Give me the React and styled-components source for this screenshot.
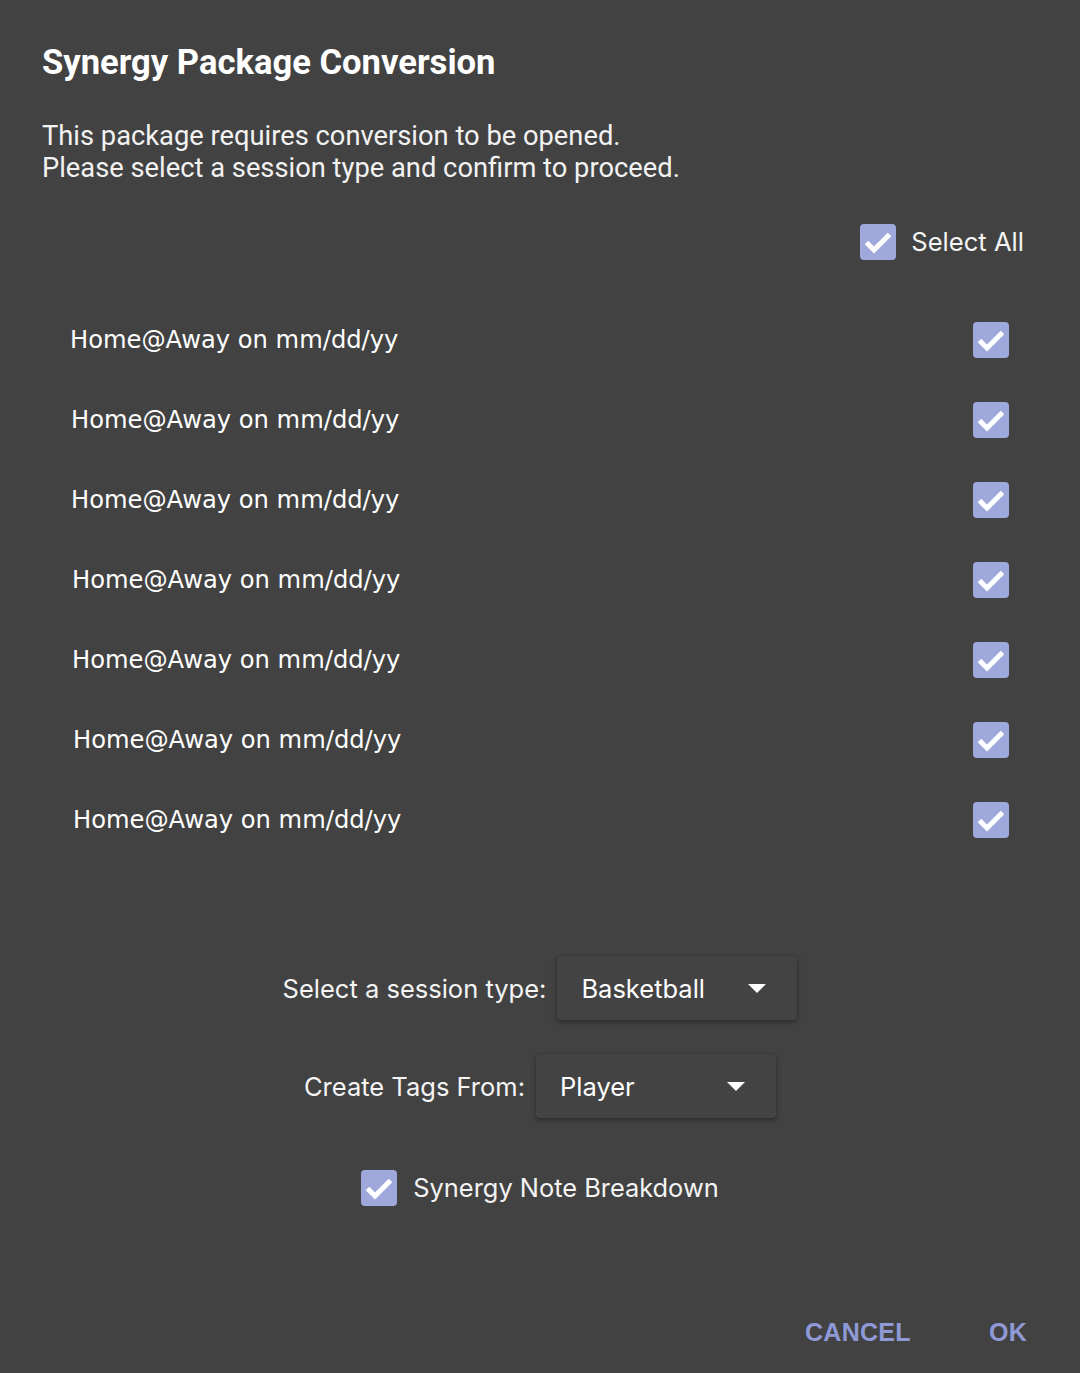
import React from "react";
import styled, { createGlobalStyle } from "styled-components";

const GlobalStyle = createGlobalStyle`
	html, body {
		margin: 0;
		padding: 0;
		background: #424242;
	}
`;

const Dialog = styled.div`
	width: 1080px;
	height: 1373px;
	box-sizing: border-box;
	background: #424242;
	color: #ffffff;
	padding: 40px 0 0 0;
	display: flex;
	flex-direction: column;
`;

const Title = styled.h1`
	margin: 0;
	padding-left: 42px;
	font-family: Roboto, "Liberation Sans", sans-serif;
	font-weight: 700;
	font-size: 34.6px;
	line-height: 44px;
`;

const Description = styled.p`
	margin: 36px 0 0 0;
	padding-left: 42px;
	font-family: Roboto, "Liberation Sans", sans-serif;
	font-size: 27.3px;
	line-height: 32px;
	color: #f2f2f2;
`;

const SelectAllRow = styled.label`
	margin-top: 40px;
	align-self: flex-end;
	padding-right: 56px;
	display: flex;
	align-items: center;
	gap: 15px;
	font-family: Inter, "Noto Sans", sans-serif;
	font-size: 25.6px;
	line-height: 36px;
	color: #f4f4f4;
`;

const Box = styled.span`
	width: 36px;
	height: 36px;
	border-radius: 4px;
	background: #9fa8da;
	display: flex;
	align-items: center;
	justify-content: center;
	flex-shrink: 0;
`;

const GameList = styled.div`
	margin-top: 40px;
	display: flex;
	flex-direction: column;
`;

const GameRow = styled.div`
	height: 80px;
	display: flex;
	align-items: center;
	justify-content: space-between;
	padding: 0 71px 0 ${(p) => p.$indent}px;
	font-family: "DejaVu Sans", Verdana, sans-serif;
	font-size: 24.2px;
	color: #ffffff;
`;

const Options = styled.div`
	margin-top: 96px;
	display: flex;
	flex-direction: column;
	align-items: center;
`;

const Field = styled.div`
	display: flex;
	align-items: center;
	gap: 11px;
	margin-top: ${(p) => p.$gap || 0}px;
	font-family: Inter, "Noto Sans", sans-serif;
	font-size: 25.5px;
	color: #f4f4f4;
`;

const Dropdown = styled.div`
	width: 240px;
	height: 64px;
	box-sizing: border-box;
	padding: 0 31px 0 24px;
	display: flex;
	align-items: center;
	justify-content: space-between;
	background: #434343;
	border-radius: 4px;
	box-shadow: 0 2px 5px rgba(0, 0, 0, 0.35), 0 0 1px rgba(0, 0, 0, 0.3);
	color: #ffffff;
`;

const Arrow = styled.span`
	width: 0;
	height: 0;
	border-left: 9px solid transparent;
	border-right: 9px solid transparent;
	border-top: 9px solid #ffffff;
`;

const NoteRow = styled.label`
	margin-top: 52px;
	display: flex;
	align-items: center;
	gap: 16px;
	font-family: Inter, "Noto Sans", sans-serif;
	font-size: 25.4px;
	line-height: 36px;
	color: #f4f4f4;
`;

const Footer = styled.div`
	margin-top: auto;
	padding: 0 53px 23px 0;
	display: flex;
	justify-content: flex-end;
	align-items: center;
	gap: 78px;
`;

const TextButton = styled.button`
	background: none;
	border: none;
	padding: 0;
	font-family: "Liberation Sans", Arial, sans-serif;
	font-weight: 700;
	font-size: 25px;
	letter-spacing: 0.3px;
	line-height: 36px;
	color: #8e99d6;
	cursor: pointer;
`;

function Checkbox() {
	return (
		<Box>
			<svg width="36" height="36" viewBox="0 0 36 36">
				<polyline
					points="6.5,18.5 14,26 29.5,10.5"
					fill="none"
					stroke="#ffffff"
					strokeWidth="5"
				/>
			</svg>
		</Box>
	);
}

const games = [70, 71, 71, 72, 72, 73, 73];

export default function App() {
	return (
		<Dialog>
			<GlobalStyle />
			<Title>Synergy Package Conversion</Title>
			<Description>
				This package requires conversion to be opened.
				<br />
				Please select a session type and confirm to proceed.
			</Description>
			<SelectAllRow>
				<Checkbox />
				Select All
			</SelectAllRow>
			<GameList>
				{games.map((indent, i) => (
					<GameRow key={i} $indent={indent}>
						<span>Home@Away on mm/dd/yy</span>
						<Checkbox />
					</GameRow>
				))}
			</GameList>
			<Options>
				<Field>
					Select a session type:
					<Dropdown>
						Basketball
						<Arrow />
					</Dropdown>
				</Field>
				<Field $gap={34}>
					Create Tags From:
					<Dropdown>
						Player
						<Arrow />
					</Dropdown>
				</Field>
				<NoteRow>
					<Checkbox />
					Synergy Note Breakdown
				</NoteRow>
			</Options>
			<Footer>
				<TextButton>CANCEL</TextButton>
				<TextButton>OK</TextButton>
			</Footer>
		</Dialog>
	);
}
